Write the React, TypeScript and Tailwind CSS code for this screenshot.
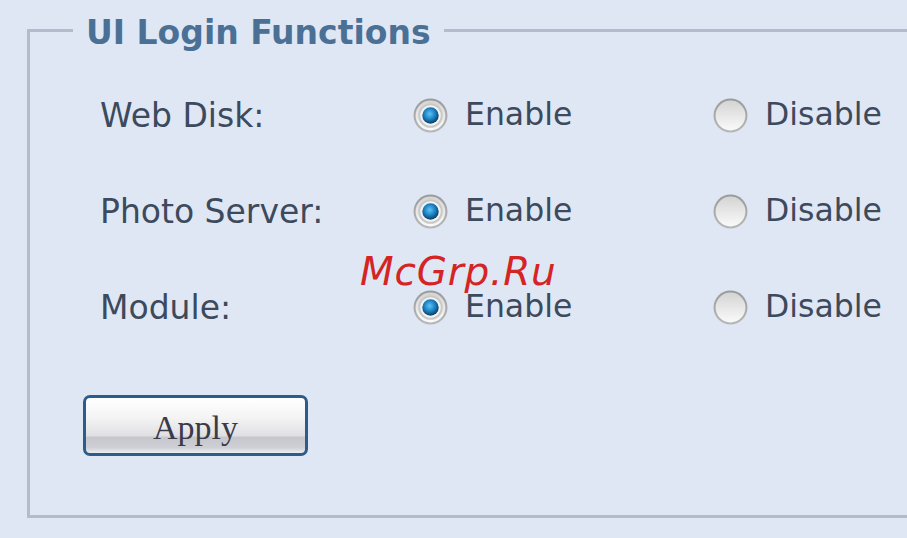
import React from "react";

function Radio({ checked }: { checked: boolean }) {
  const id = checked ? "on" : "off";
  return (
    <svg width="37" height="37" viewBox="0 0 36 36" className="shrink-0">
      <defs>
        <linearGradient id={`ring-${id}`} x1="0" y1="0" x2="0" y2="1">
          <stop offset="0" stopColor="#9a9a9a" />
          <stop offset="1" stopColor="#b8b8b8" />
        </linearGradient>
        <linearGradient id={`face-${id}`} x1="0" y1="0" x2="0" y2="1">
          <stop offset="0" stopColor="#d4d4d4" />
          <stop offset="1" stopColor="#fafafa" />
        </linearGradient>
        <radialGradient id="dot" cx="0.45" cy="0.4" r="0.6">
          <stop offset="0" stopColor="#5fc4f4" />
          <stop offset="0.55" stopColor="#1b82c4" />
          <stop offset="1" stopColor="#0b3c62" />
        </radialGradient>
      </defs>
      <circle cx="18" cy="18" r="16.5" fill={`url(#ring-${id})`} />
      <circle cx="18" cy="18" r="14.5" fill={`url(#face-${id})`} />
      {checked && (
        <>
          <circle cx="18" cy="18" r="12" fill="#c9c9c9" />
          <circle cx="18" cy="18" r="10" fill="#f4f4f4" />
          <circle cx="18" cy="18" r="8" fill="url(#dot)" />
        </>
      )}
    </svg>
  );
}

const rows = [
  { label: "Web Disk:" },
  { label: "Photo Server:" },
  { label: "Module:" },
];

export default function App() {
  return (
    <div
      className="relative w-[907px] h-[538px] overflow-hidden bg-[#dfe7f5] text-[#3c4a5c]"
      style={{ fontFamily: '"DejaVu Sans", Verdana, sans-serif' }}
    >
      <fieldset className="ml-[27px] mt-[12px] w-[900px] h-[506px] border-[3px] border-[#b5bbcc] pl-[70px] pr-0 pt-[19px] pb-0">
        <legend className="-ml-[27px] px-[13px] text-[33px] leading-[36px] font-bold text-[#4a7096]">
          <span className="relative top-[3px]">UI Login Functions</span>
        </legend>
        <div className="flex flex-col">
          {rows.map((r) => (
            <div key={r.label} className="flex h-[96px] items-center leading-none">
              <div className="w-[312px] text-[33px]">{r.label}</div>
              <div className="flex w-[300px] items-center gap-[16px] text-[31.5px]">
                <Radio checked />
                <span>Enable</span>
              </div>
              <div className="flex items-center gap-[16px] text-[31.5px]">
                <Radio checked={false} />
                <span>Disable</span>
              </div>
            </div>
          ))}
        </div>
        <button
          className="-ml-[17px] mt-[40px] flex h-[61px] w-[225px] items-center justify-center rounded-[7px] border-[3px] border-[#2c5c8c] bg-[linear-gradient(to_bottom,#ffffff_0%,#f4f4f4_35%,#e0e0e4_68%,#c6c7cc_72%,#cfd0d5_90%,#ecedf0_100%)] pt-[4px] text-[34px] text-[#3a3a48]"
          style={{ fontFamily: '"Liberation Serif", "Times New Roman", serif' }}
        >
          Apply
        </button>
      </fieldset>
      <div className="absolute left-[360px] top-[250px] text-[39px] italic leading-[44px] tracking-[0.02em] text-[#d42424]">
        McGrp.Ru
      </div>
    </div>
  );
}
